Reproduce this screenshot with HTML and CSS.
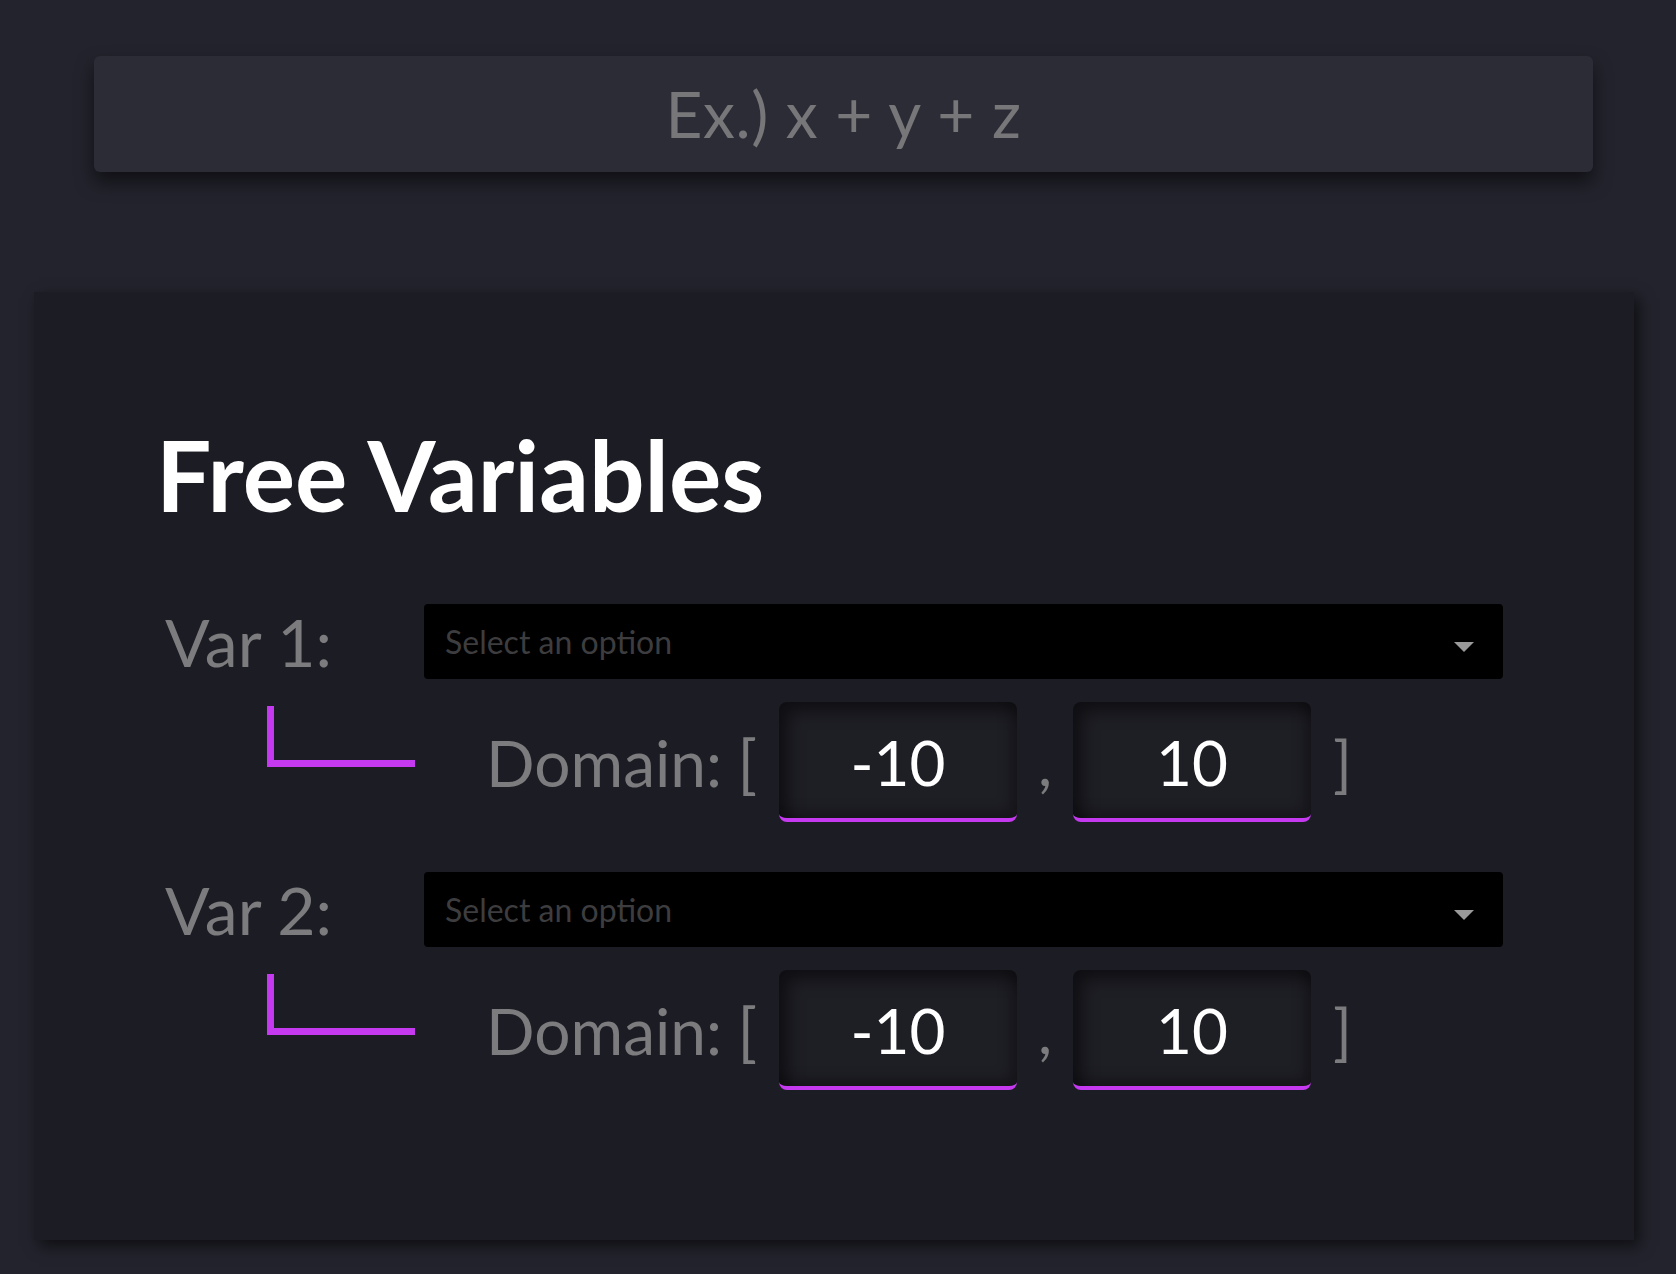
FILE: index.html
```html
<!DOCTYPE html>
<html lang="en">
<head>
<meta charset="utf-8">
<title>Free Variables</title>
<link rel="stylesheet" href="styles.css">
</head>
<body>
<div class="page">
  <div class="formula">Ex.) x + y + z</div>
  <section class="card">
    <h1 class="title">Free Variables</h1>

    <div class="var">
      <div class="var-row">
        <div class="var-label">Var 1:</div>
        <div class="select">
          <span class="placeholder">Select an option</span>
          <span class="arrow"></span>
        </div>
      </div>
      <div class="domain-row">
        <div class="connector"></div>
        <div class="domain-label"><span>Domain:</span><span>[</span></div>
        <div class="num">-10</div>
        <div class="comma">,</div>
        <div class="num">10</div>
        <div class="close">]</div>
      </div>
    </div>

    <div class="var">
      <div class="var-row">
        <div class="var-label">Var 2:</div>
        <div class="select">
          <span class="placeholder">Select an option</span>
          <span class="arrow"></span>
        </div>
      </div>
      <div class="domain-row">
        <div class="connector"></div>
        <div class="domain-label"><span>Domain:</span><span>[</span></div>
        <div class="num">-10</div>
        <div class="comma">,</div>
        <div class="num">10</div>
        <div class="close">]</div>
      </div>
    </div>
  </section>
</div>
</body>
</html>
```

FILE: styles.css
```css
html, body {
  margin: 0;
  padding: 0;
  background: #23232d;
  font-family: "Lato", "Noto Sans", sans-serif;
}

.page {
  padding: 56px 42px 34px 34px;
}

.formula {
  margin: 0 41px 0 60px;
  height: 116px;
  line-height: 116px;
  background: #2c2c36;
  border-radius: 6px;
  box-shadow: 0 10px 18px rgba(0, 0, 0, 0.55);
  color: #777779;
  font-size: 64px;
  letter-spacing: 0.6px;
  text-align: center;
}

.card {
  margin-top: 120px;
  height: 948px;
  box-sizing: border-box;
  background: #1c1c25;
  box-shadow: 5px 6px 14px rgba(0, 0, 0, 0.6);
  padding: 132px 0 0 122px;
}

.title {
  margin: 0 0 80px 0;
  font-size: 98px;
  line-height: 100px;
  font-weight: 700;
  color: #ffffff;
}

.var {
  margin-bottom: 50px;
}

.var-row {
  display: flex;
  align-items: center;
  height: 75px;
}

.var-label {
  width: 259px;
  margin-left: 9px;
  font-size: 66px;
  color: #7c7c7e;
}

.select {
  width: 1079px;
  height: 75px;
  box-sizing: border-box;
  background: #000000;
  border-radius: 4px;
  display: flex;
  align-items: center;
  justify-content: space-between;
  padding: 0 29px 0 21px;
}

.placeholder {
  font-size: 32px;
  color: #3d3d3f;
}

.arrow {
  width: 0;
  height: 0;
  border-left: 10px solid transparent;
  border-right: 10px solid transparent;
  border-top: 10px solid #9a9a9a;
  margin-top: 10px;
}

.domain-row {
  display: flex;
  align-items: center;
  margin-top: 23px;
  height: 120px;
}

.connector {
  align-self: flex-start;
  margin-top: 4px;
  margin-left: 111px;
  width: 141px;
  height: 54px;
  border-left: 7px solid #c53af0;
  border-bottom: 7px solid #c53af0;
}

.domain-label {
  margin-left: 71px;
  width: 271px;
  margin-right: 22px;
  display: flex;
  justify-content: space-between;
  font-size: 64px;
  color: #7c7c7e;
}

.num {
  width: 238px;
  height: 120px;
  box-sizing: border-box;
  border-radius: 8px;
  border-bottom: 4px solid #c53af0;
  background: #1e1e25;
  box-shadow: inset 10px 10px 16px rgba(0, 0, 0, 0.45), inset -6px -6px 14px rgba(0, 0, 0, 0.3);
  color: #ffffff;
  font-size: 62px;
  display: flex;
  align-items: center;
  justify-content: center;
  padding-top: 4px;
}

.comma {
  width: 56px;
  text-align: center;
  font-size: 62px;
  color: #7c7c7e;
}

.close {
  margin-left: 22px;
  font-size: 62px;
  color: #7c7c7e;
}
```
